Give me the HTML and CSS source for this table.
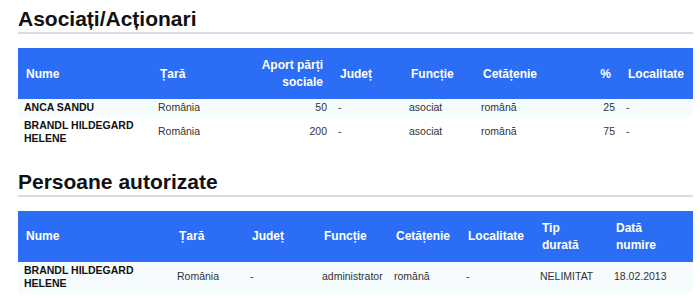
FILE: index.html
```html
<!DOCTYPE html>
<html lang="ro">
<head>
<meta charset="utf-8">
<title>Asociați</title>
<link rel="stylesheet" href="styles.css">
</head>
<body>
<div class="page">
  <h2 class="section-title">Asociați/Acționari</h2>
  <table class="data t1">
    <colgroup>
      <col class="w134"><col class="w88"><col class="w92"><col class="w71"><col class="w72"><col class="w95"><col class="w50"><col class="w73">
    </colgroup>
    <thead>
      <tr>
        <th>Nume</th><th>Țară</th><th class="num">Aport părți sociale</th><th>Județ</th><th>Funcție</th><th>Cetățenie</th><th class="num">%</th><th>Localitate</th>
      </tr>
    </thead>
    <tbody>
      <tr>
        <td class="name">ANCA SANDU</td><td>România</td><td class="num">50</td><td>-</td><td>asociat</td><td>română</td><td class="num">25</td><td>-</td>
      </tr>
      <tr>
        <td class="name">BRANDL HILDEGARD HELENE</td><td>România</td><td class="num">200</td><td>-</td><td>asociat</td><td>română</td><td class="num">75</td><td>-</td>
      </tr>
    </tbody>
  </table>

  <h2 class="section-title second">Persoane autorizate</h2>
  <table class="data t2">
    <colgroup>
      <col class="w153"><col class="w73"><col class="w72"><col class="w72"><col class="w72"><col class="w74"><col class="w74"><col class="w85">
    </colgroup>
    <thead>
      <tr>
        <th>Nume</th><th>Țară</th><th>Județ</th><th>Funcție</th><th>Cetățenie</th><th>Localitate</th><th>Tip durată</th><th>Dată numire</th>
      </tr>
    </thead>
    <tbody>
      <tr>
        <td class="name">BRANDL HILDEGARD HELENE</td><td>România</td><td>-</td><td>administrator</td><td>română</td><td>-</td><td>NELIMITAT</td><td>18.02.2013</td>
      </tr>
    </tbody>
  </table>
</div>
</body>
</html>
```
FILE: styles.css
```css
html, body {
  margin: 0;
  padding: 0;
  background: #ffffff;
}

body {
  font-family: "Liberation Sans", Arial, sans-serif;
  color: #333333;
}

.page {
  width: 675px;
  margin-left: 18px;
  padding-top: 7px;
}

.section-title {
  margin: 0 0 14px 0;
  font-size: 21px;
  line-height: 24px;
  font-weight: bold;
  color: #111111;
  padding-bottom: 1px;
  border-bottom: 2px solid #d6dce8;
}

.section-title.second {
  margin-top: 22px;
}

.data {
  width: 675px;
  table-layout: fixed;
  border-collapse: collapse;
  border-spacing: 0;
}

.data th {
  background: #2c6df5;
  color: #ffffff;
  font-size: 12px;
  line-height: 17px;
  font-weight: bold;
  text-align: left;
  vertical-align: middle;
  padding: 9px 9px 8px 8px;
}

.data td {
  font-size: 10.5px;
  line-height: 13.5px;
  vertical-align: middle;
  padding: 2px 5px 2px 6px;
  white-space: normal;
}

.data tbody tr:nth-child(odd) td {
  background: #f6fbfd;
}

.data .num {
  text-align: right;
}

.data td.name {
  font-weight: bold;
  color: #111111;
}

.w134 { width: 134px; }
.w88 { width: 88px; }
.w92 { width: 92px; }
.w71 { width: 71px; }
.w72 { width: 72px; }
.w95 { width: 95px; }
.w50 { width: 50px; }
.w73 { width: 73px; }
.w153 { width: 153px; }
.w74 { width: 74px; }
.w85 { width: 85px; }
```
